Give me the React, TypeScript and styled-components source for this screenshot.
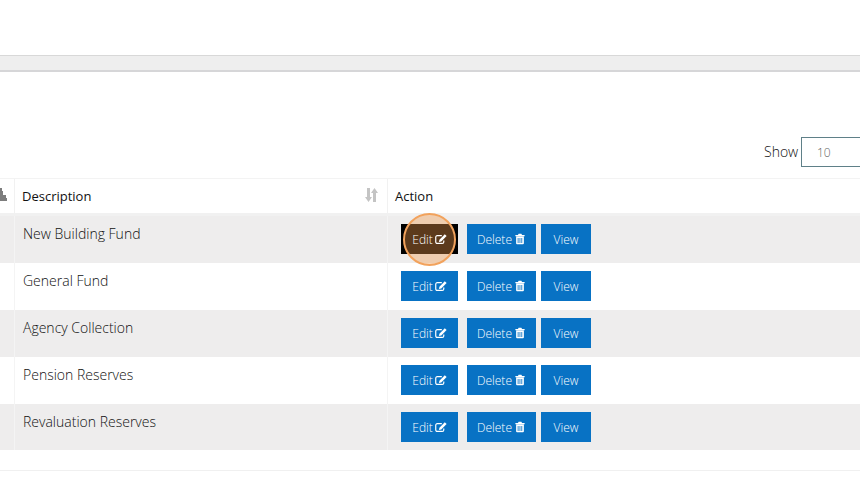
import React from 'react';
import styled, { createGlobalStyle } from 'styled-components';

const GlobalStyle = createGlobalStyle`
  html, body {
    margin: 0;
    padding: 0;
    background: #fff;
    overflow: hidden;
  }
  * {
    box-sizing: border-box;
  }
`;

const Page = styled.div`
  width: 860px;
  height: 481px;
  overflow: hidden;
  font-family: 'Open Sans', 'Liberation Sans', sans-serif;
  color: #333;
`;

const TopSpace = styled.div`
  height: 55px;
`;

const GreyBand = styled.div`
  height: 17px;
  background: #eeeeee;
  border-top: 1px solid #d8d8d8;
  border-bottom: 2px solid #d6d6d8;
`;

const ShowRow = styled.div`
  display: flex;
  align-items: center;
  height: 30px;
  margin-top: 65px;
  padding-left: 764px;
  width: 960px;
`;

const ShowLabel = styled.span`
  font-size: 14px;
  font-weight: 300;
  line-height: 26px;
  color: #111;
  width: 37px;
`;

const ShowSelect = styled.div`
  width: 120px;
  height: 30px;
  border: 1px solid #5f8088;
  font-size: 12px;
  font-weight: 300;
  line-height: 30px;
  padding-left: 15px;
  color: #666;
`;

const Table = styled.div`
  margin-top: 11px;
  width: 860px;
  border-top: 1px solid #f3f3f3;
`;

const HeadRow = styled.div`
  display: grid;
  grid-template-columns: 15px 373px 1fr;
  height: 37px;
  border-bottom: 3px solid #f1f1f1;
`;

const HeadCell = styled.div`
  position: relative;
  display: flex;
  align-items: center;
  padding-left: 7px;
  padding-bottom: 1px;
  font-size: 13px;
  color: #111;
  overflow: hidden;
  border-right: 1px solid #f1f1f1;

  &:last-child {
    border-right: 0;
  }
`;

const EdgeIcon = styled.svg`
  position: absolute;
  left: -5px;
  top: 9px;
  width: 12px;
  height: 14px;
  color: #7d7d7d;
`;

const SortIcon = styled.svg`
  position: absolute;
  right: 9px;
  top: 9px;
  width: 13px;
  height: 14px;
  color: #c4c4c4;
`;

const Row = styled.div<{ $shaded: boolean; $short?: boolean }>`
  display: grid;
  grid-template-columns: 15px 373px 1fr;
  height: ${props => (props.$short ? 46 : 47)}px;
  background: ${props => (props.$shaded ? '#eeeded' : '#fff')};
`;

const EdgeCell = styled.div`
  border-right: 1px solid #f4f4f4;
`;

const DescCell = styled.div`
  padding: 8px 0 0 8px;
  font-size: 14px;
  font-weight: 300;
  line-height: 20px;
  color: #111;
  border-right: 1px solid #f4f4f4;
`;

const ActionCell = styled.div`
  display: flex;
  align-items: flex-start;
  padding: 8px 0 0 13px;
`;

const ActionButton = styled.div<{ $width: number; $gap: number; $active?: boolean }>`
  position: relative;
  display: flex;
  align-items: center;
  justify-content: center;
  width: ${props => props.$width}px;
  height: 30px;
  margin-right: ${props => props.$gap}px;
  background: ${props => (props.$active ? '#000' : '#0872c4')};
  color: #fff;
  font-size: 12px;
  font-weight: 300;
`;

const ClickMark = styled.div`
  position: absolute;
  left: 2px;
  top: -11px;
  width: 53px;
  height: 53px;
  border-radius: 50%;
  border: 2px solid #f2a25c;
  background: rgba(242, 153, 74, 0.38);
`;

const ButtonLabel = styled.span`
  position: relative;
  display: flex;
  align-items: center;
  gap: 2px;
`;

const ButtonIcon = styled.svg`
  width: 12px;
  height: 12px;
  display: block;
`;

const BottomLine = styled.div`
  margin-top: 20px;
  height: 1px;
  background: #f0f0f0;
`;

const EditGlyph = () => (
  <ButtonIcon viewBox="0 0 13 12">
    <path
      fill="none"
      stroke="currentColor"
      strokeWidth="1.3"
      d="M9.5 7.5v1.7a1.6 1.6 0 0 1-1.6 1.6H2.400A1.6 1.6 0 0 1 .8 9.200V4a1.6 1.6 0 0 1 1.600-1.600h5"
    />
    <path fill="currentColor" d="M10.600.8l2 2-5.800 5.900-2.600.6.6-2.600z" />
  </ButtonIcon>
);

const TrashGlyph = () => (
  <ButtonIcon viewBox="0 0 13 12">
    <path
      fill="currentColor"
      fillRule="evenodd"
      d="M1.500 1.800h2.800L5 .4h3l.7 1.400h2.800v1.100h-10zM2.300 3.400h8.400v7.200a1 1 0 0 1-1 1H3.300a1 1 0 0 1-1-1zM4 4.800v5.400h.9V4.800zM6 4.800v5.400h.9V4.800zM8 4.800v5.400h.9V4.800z"
    />
  </ButtonIcon>
);

const funds = [
  'New Building Fund',
  'General Fund',
  'Agency Collection',
  'Pension Reserves',
  'Revaluation Reserves',
];

const App: React.FC = () => {
  return (
    <Page>
      <GlobalStyle />
      <TopSpace />
      <GreyBand />
      <ShowRow>
        <ShowLabel>Show</ShowLabel>
        <ShowSelect>10</ShowSelect>
      </ShowRow>
      <Table>
        <HeadRow>
          <HeadCell>
            <EdgeIcon viewBox="0 0 12 14">
              <path fill="currentColor" d="M4 0h3v3H4zM3 3h5v4H3zM1 7h10v3H1zM0 10h12v3H0z" />
            </EdgeIcon>
          </HeadCell>
          <HeadCell>
            Description
            <SortIcon viewBox="0 0 13 14">
              <path fill="currentColor" d="M2 0h3v9h2l-3.500 5L0 9h2zM8 14h3V5h2L9.500 0 6 5h2z" />
            </SortIcon>
          </HeadCell>
          <HeadCell>Action</HeadCell>
        </HeadRow>
        {funds.map((name, i) => (
          <Row key={name} $shaded={i % 2 === 0} $short={i === funds.length - 1}>
            <EdgeCell />
            <DescCell>{name}</DescCell>
            <ActionCell>
              <ActionButton $width={57} $gap={9} $active={i === 0}>
                {i === 0 && <ClickMark />}
                <ButtonLabel>
                  Edit <EditGlyph />
                </ButtonLabel>
              </ActionButton>
              <ActionButton $width={69} $gap={5}>
                <ButtonLabel>
                  Delete <TrashGlyph />
                </ButtonLabel>
              </ActionButton>
              <ActionButton $width={50} $gap={0}>
                View
              </ActionButton>
            </ActionCell>
          </Row>
        ))}
      </Table>
      <BottomLine />
    </Page>
  );
};

export default App;
